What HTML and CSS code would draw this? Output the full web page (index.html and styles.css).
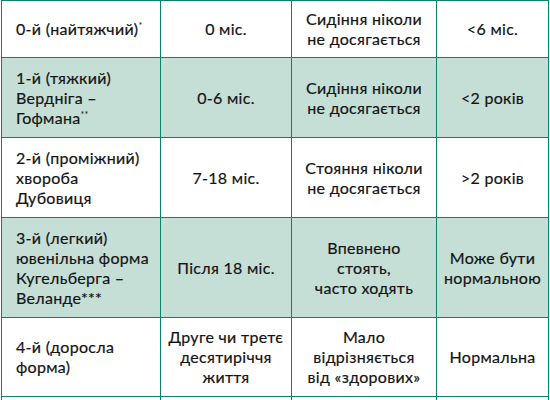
FILE: index.html
```html
<!DOCTYPE html>
<html lang="uk">
<head>
<meta charset="utf-8">
<link rel="stylesheet" href="styles.css">
</head>
<body>
<div class="grid">
  <div class="cell left"><span>0-й (найтяжчий)<sup>*</sup></span></div>
  <div class="cell"><span>0 міс.</span></div>
  <div class="cell"><span>Сидіння ніколи<br>не досягається</span></div>
  <div class="cell"><span>&lt;6 міс.</span></div>

  <div class="cell left tint"><span>1-й (тяжкий)<br>Вердніга –<br>Гофмана<sup>**</sup></span></div>
  <div class="cell tint"><span>0-6 міс.</span></div>
  <div class="cell tint"><span>Сидіння ніколи<br>не досягається</span></div>
  <div class="cell tint"><span>&lt;2 років</span></div>

  <div class="cell left"><span>2-й (проміжний)<br>хвороба<br>Дубовиця</span></div>
  <div class="cell"><span>7-18 міс.</span></div>
  <div class="cell"><span>Стояння ніколи<br>не досягається</span></div>
  <div class="cell"><span>&gt;2 років</span></div>

  <div class="cell left tint"><span>3-й (легкий)<br>ювенільна форма<br>Кугельберга –<br>Веланде***</span></div>
  <div class="cell tint"><span>Після 18 міс.</span></div>
  <div class="cell tint"><span>Впевнено<br>стоять,<br>часто ходять</span></div>
  <div class="cell tint"><span>Може бути<br>нормальною</span></div>

  <div class="cell left"><span>4-й (доросла<br>форма)</span></div>
  <div class="cell"><span>Друге чи третє<br>десятиріччя<br>життя</span></div>
  <div class="cell"><span>Мало<br>відрізняється<br>від «здорових»</span></div>
  <div class="cell"><span>Нормальна</span></div>

  <div class="cell"></div>
  <div class="cell"></div>
  <div class="cell"></div>
  <div class="cell"></div>
</div>
</body>
</html>
```

FILE: styles.css
```css
html, body {
  margin: 0;
  padding: 0;
  background: #ffffff;
  overflow: hidden;
  height: 400px;
}

.grid {
  margin-left: 1px;
  width: 546px;
  height: 400px;
  display: grid;
  grid-template-columns: 158px 130px 144px 111px;
  grid-template-rows: 56px 79px 79px 99px 78px 1fr;
  gap: 1px;
  padding: 1px 1px 0 1px;
  box-sizing: content-box;
  background: #0b8466;
  font-family: Lato, "Noto Sans", sans-serif;
  font-size: 16px;
  line-height: 20px;
  color: #141414;
  -webkit-text-stroke: 0.2px #141414;
}

.cell {
  background: #ffffff;
  display: flex;
  flex-direction: column;
  justify-content: center;
  align-items: center;
  text-align: center;
  white-space: nowrap;
  letter-spacing: 0.3px;
  overflow: hidden;
}

.cell.left {
  align-items: flex-start;
  text-align: left;
  padding-left: 14px;
}

.cell.tint {
  background: #c5dfd7;
}

sup {
  font-size: 9px;
  line-height: 0;
  vertical-align: 6px;
  -webkit-text-stroke: 0;
}
```
